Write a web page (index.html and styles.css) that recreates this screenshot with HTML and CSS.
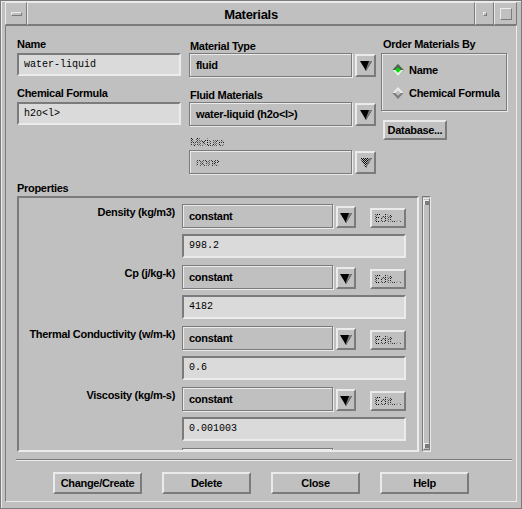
FILE: index.html
```html
<!DOCTYPE html>
<html lang="en">
<head>
  <meta charset="UTF-8" />
  <title>Materials</title>
  <link rel="stylesheet" href="styles.css">
</head>
<body>
  <div class="window">
    <div class="titlebar">
      <div class="tb-menu"><span class="tb-bar"></span></div>
      <div class="tb-title">Materials</div>
      <div class="tb-min"><span class="tb-dot"></span></div>
      <div class="tb-max"><span class="tb-square"></span></div>
    </div>

    <div class="panel">
      <div class="top">
        <div class="col col-name">
          <div class="lbl">Name</div>
          <div class="field">water-liquid</div>
          <div class="lbl lbl-second">Chemical Formula</div>
          <div class="field">h2o&lt;l&gt;</div>
        </div>

        <div class="col col-type">
          <div class="lbl">Material Type</div>
          <div class="optline">
            <div class="option">fluid</div>
            <div class="arrow"><svg width="12" height="11" viewBox="0 0 12 11"><polygon points="0,1 12,1 6,11" fill="#000"/><polygon points="12,1 9,1 6,9 6,11" fill="#7b7b7b"/></svg></div>
          </div>
          <div class="lbl lbl-second">Fluid Materials</div>
          <div class="optline">
            <div class="option">water-liquid (h2o&lt;l&gt;)</div>
            <div class="arrow"><svg width="12" height="11" viewBox="0 0 12 11"><polygon points="0,1 12,1 6,11" fill="#000"/><polygon points="12,1 9,1 6,9 6,11" fill="#7b7b7b"/></svg></div>
          </div>
          <div class="lbl lbl-third stipple">Mixture</div>
          <div class="optline">
            <div class="option"><span class="stipple">none</span></div>
            <div class="arrow"><svg width="12" height="11" viewBox="0 0 12 11"><pattern id="dots" width="2" height="2" patternUnits="userSpaceOnUse"><rect width="1" height="1" fill="#000"/><rect x="1" y="1" width="1" height="1" fill="#000"/></pattern><polygon points="0,1 12,1 6,11" fill="url(#dots)"/><polygon points="12,1 9,1 6,9 6,11" fill="#7b7b7b"/></svg></div>
          </div>
        </div>

        <div class="col col-order">
          <div class="lbl">Order Materials By</div>
          <div class="group">
            <div class="radio"><span class="diamond on"></span>Name</div>
            <div class="radio"><span class="diamond"></span>Chemical Formula</div>
          </div>
          <div class="btn btn-db">Database...</div>
        </div>
      </div>

      <div class="lbl props-lbl">Properties</div>
      <div class="props">
        <div class="props-frame">
          <div class="prop">
            <div class="prop-name">Density (kg/m3)</div>
            <div class="prop-body">
              <div class="optline">
                <div class="option option-sm">constant</div>
                <div class="arrow arrow-sm"><svg width="12" height="11" viewBox="0 0 12 11"><polygon points="0,1 12,1 6,11" fill="#000"/><polygon points="12,1 9,1 6,9 6,11" fill="#7b7b7b"/></svg></div>
                <div class="btn btn-edit"><span class="stipple">Edit...</span></div>
              </div>
              <div class="field field-val">998.2</div>
            </div>
          </div>
          <div class="prop">
            <div class="prop-name">Cp (j/kg-k)</div>
            <div class="prop-body">
              <div class="optline">
                <div class="option option-sm">constant</div>
                <div class="arrow arrow-sm"><svg width="12" height="11" viewBox="0 0 12 11"><polygon points="0,1 12,1 6,11" fill="#000"/><polygon points="12,1 9,1 6,9 6,11" fill="#7b7b7b"/></svg></div>
                <div class="btn btn-edit"><span class="stipple">Edit...</span></div>
              </div>
              <div class="field field-val">4182</div>
            </div>
          </div>
          <div class="prop">
            <div class="prop-name">Thermal Conductivity (w/m-k)</div>
            <div class="prop-body">
              <div class="optline">
                <div class="option option-sm">constant</div>
                <div class="arrow arrow-sm"><svg width="12" height="11" viewBox="0 0 12 11"><polygon points="0,1 12,1 6,11" fill="#000"/><polygon points="12,1 9,1 6,9 6,11" fill="#7b7b7b"/></svg></div>
                <div class="btn btn-edit"><span class="stipple">Edit...</span></div>
              </div>
              <div class="field field-val">0.6</div>
            </div>
          </div>
          <div class="prop">
            <div class="prop-name">Viscosity (kg/m-s)</div>
            <div class="prop-body">
              <div class="optline">
                <div class="option option-sm">constant</div>
                <div class="arrow arrow-sm"><svg width="12" height="11" viewBox="0 0 12 11"><polygon points="0,1 12,1 6,11" fill="#000"/><polygon points="12,1 9,1 6,9 6,11" fill="#7b7b7b"/></svg></div>
                <div class="btn btn-edit"><span class="stipple">Edit...</span></div>
              </div>
              <div class="field field-val">0.001003</div>
            </div>
          </div>
          <div class="prop">
            <div class="prop-name"></div>
            <div class="prop-body">
              <div class="optline">
                <div class="option option-sm"></div>
              </div>
            </div>
          </div>
        </div>
        <div class="scrollbar">
          <div class="thumb">
            <span class="sb-up"></span>
            <span class="sb-down"></span>
          </div>
        </div>
      </div>

      <div class="sep"></div>

      <div class="buttons">
        <div class="btn btn-main">Change/Create</div>
        <div class="btn btn-main">Delete</div>
        <div class="btn btn-main">Close</div>
        <div class="btn btn-main">Help</div>
      </div>
    </div>
  </div>
</body>
</html>
```

FILE: styles.css
```css
* {
  margin: 0;
  padding: 0;
  box-sizing: border-box;
}

body {
  background: #c0c0c0;
  font-family: 'Liberation Sans', Arial, sans-serif;
  font-size: 11px;
  font-weight: bold;
  color: #000;
}

.window {
  width: 522px;
  height: 509px;
  background: #c0c0c0;
  border: 1px solid #7b7b7b;
  box-shadow: inset 1px 1px 0 #ebebeb;
  padding: 1px 4px 6px 4px;
  display: flex;
  flex-direction: column;
}

/* title bar */
.titlebar {
  height: 23px;
  display: flex;
  flex-shrink: 0;
}

.tb-menu, .tb-title, .tb-min, .tb-max {
  border: 1px solid;
  border-color: #ebebeb #7b7b7b #7b7b7b #ebebeb;
  display: flex;
  align-items: center;
  justify-content: center;
}

.tb-menu {
  width: 22px;
}

.tb-bar {
  width: 11px;
  height: 4px;
  border: 1px solid;
  border-color: #ebebeb #7b7b7b #7b7b7b #ebebeb;
}

.tb-title {
  flex: 1;
  font-size: 13px;
  letter-spacing: -0.3px;
  padding-top: 1px;
}

.tb-min {
  width: 19px;
}

.tb-dot {
  width: 4px;
  height: 4px;
  border: 1px solid;
  border-color: #ebebeb #7b7b7b #7b7b7b #ebebeb;
}

.tb-max {
  width: 23px;
}

.tb-square {
  width: 12px;
  height: 12px;
  border: 1px solid;
  border-color: #ebebeb #7b7b7b #7b7b7b #ebebeb;
}

/* main panel */
.panel {
  flex: 1;
  border: 1px solid;
  border-color: #7b7b7b #ebebeb #ebebeb #7b7b7b;
  padding: 11px 0 0 11px;
}

.lbl {
  height: 14px;
  line-height: 14px;
  letter-spacing: -0.3px;
  margin-bottom: 2px;
}

.top {
  display: flex;
}

.col-name {
  width: 164px;
}

.col-name .lbl-second {
  margin-top: 10px;
}

.col-type {
  width: 187px;
  margin-left: 8px;
  padding-top: 2px;
}

.col-type .lbl {
  margin-bottom: 0;
  padding-left: 1px;
}

.col-type .lbl-second {
  margin-top: 11px;
}

.col-type .lbl-third {
  margin-top: 9px;
  margin-bottom: 1px;
}

.col-order {
  width: 124px;
  margin-left: 7px;
}

.field {
  height: 23px;
  background: #dadada;
  border: 2px solid;
  border-color: #7b7b7b #ebebeb #ebebeb #7b7b7b;
  font-family: 'Liberation Mono', monospace;
  font-weight: normal;
  font-size: 10px;
  line-height: 19px;
  padding-left: 5px;
}

.optline {
  display: flex;
  align-items: flex-start;
}

.option {
  width: 163px;
  height: 24px;
  border: 1px solid #7b7b7b;
  box-shadow: inset 1px 1px 0 #ebebeb, 1px 1px 0 #ebebeb;
  line-height: 22px;
  padding-left: 6px;
  letter-spacing: -0.3px;
}

.arrow {
  width: 21px;
  height: 23px;
  margin: 1px 0 0 3px;
  border: 2px solid;
  border-color: #ebebeb #7b7b7b #7b7b7b #ebebeb;
  display: flex;
  align-items: center;
  justify-content: center;
}

.stipple {
  color: transparent;
  background: repeating-conic-gradient(#000 0 25%, transparent 0 50%) 0 0 / 2px 2px;
  -webkit-background-clip: text;
  background-clip: text;
  font-weight: normal;
}

/* order by group */
.group {
  height: 58px;
  margin: 0 0 9px -2px;
  border: 1px solid #7b7b7b;
  box-shadow: inset 1px 1px 0 #ebebeb, 1px 1px 0 #ebebeb;
  padding: 4px 0 0 10px;
}

.radio {
  height: 23px;
  display: flex;
  align-items: center;
  letter-spacing: -0.3px;
}

.diamond {
  width: 8px;
  height: 8px;
  margin: 0 7px 0 2px;
  transform: rotate(45deg);
  background: #c0c0c0;
  border: 2px solid;
  border-color: #ebebeb #7b7b7b #7b7b7b #ebebeb;
}

.diamond.on {
  background: #00e000;
  border-color: #5a5a5a #ebebeb #ebebeb #5a5a5a;
}

.btn {
  border: 2px solid;
  border-color: #ebebeb #7b7b7b #7b7b7b #ebebeb;
  display: flex;
  align-items: center;
  justify-content: center;
  letter-spacing: -0.3px;
}

.btn-db {
  width: 64px;
  height: 20px;
}

/* properties */
.props-lbl {
  margin-top: 7px;
  margin-bottom: 1px;
}

.props {
  display: flex;
  height: 256px;
}

.props-frame {
  width: 402px;
  border: 2px solid;
  border-color: #7b7b7b #ebebeb #ebebeb #7b7b7b;
  padding-top: 6px;
  overflow: hidden;
}

.prop {
  display: flex;
  height: 61px;
}

.prop-name {
  width: 156px;
  text-align: right;
  padding-top: 2px;
  letter-spacing: -0.3px;
}

.prop-body {
  margin-left: 7px;
  width: 224px;
}

.option-sm {
  width: 151px;
}

.arrow-sm {
  width: 20px;
  margin-top: 2px;
  height: 22px;
}

.btn-edit {
  width: 36px;
  height: 20px;
  margin: 4px 0 0 14px;
  font-family: 'DejaVu Sans', sans-serif;
  font-size: 10px;
}

.field-val {
  margin-top: 6px;
  height: 24px;
  line-height: 20px;
}

.scrollbar {
  width: 9px;
  margin-left: 3px;
  border: 1px solid;
  border-color: #7b7b7b #ebebeb #ebebeb #7b7b7b;
  padding: 1px 0;
}

.thumb {
  height: 100%;
  border: 1px solid;
  border-color: #ebebeb #7b7b7b #7b7b7b #ebebeb;
  display: flex;
  flex-direction: column;
  justify-content: space-between;
  align-items: center;
  padding: 1px 0;
}

.sb-up, .sb-down {
  width: 5px;
  height: 5px;
  background: #7b7b7b;
  box-shadow: inset 1px 1px 0 #ebebeb;
}

.sep {
  margin: 7px 4px 0 -1px;
  height: 2px;
  border-top: 1px solid #7b7b7b;
  border-bottom: 1px solid #ebebeb;
}

.buttons {
  display: flex;
  justify-content: center;
  gap: 20px;
  margin: 11px 0 0 -11px;
}

.btn-main {
  width: 89px;
  height: 22px;
}
```
